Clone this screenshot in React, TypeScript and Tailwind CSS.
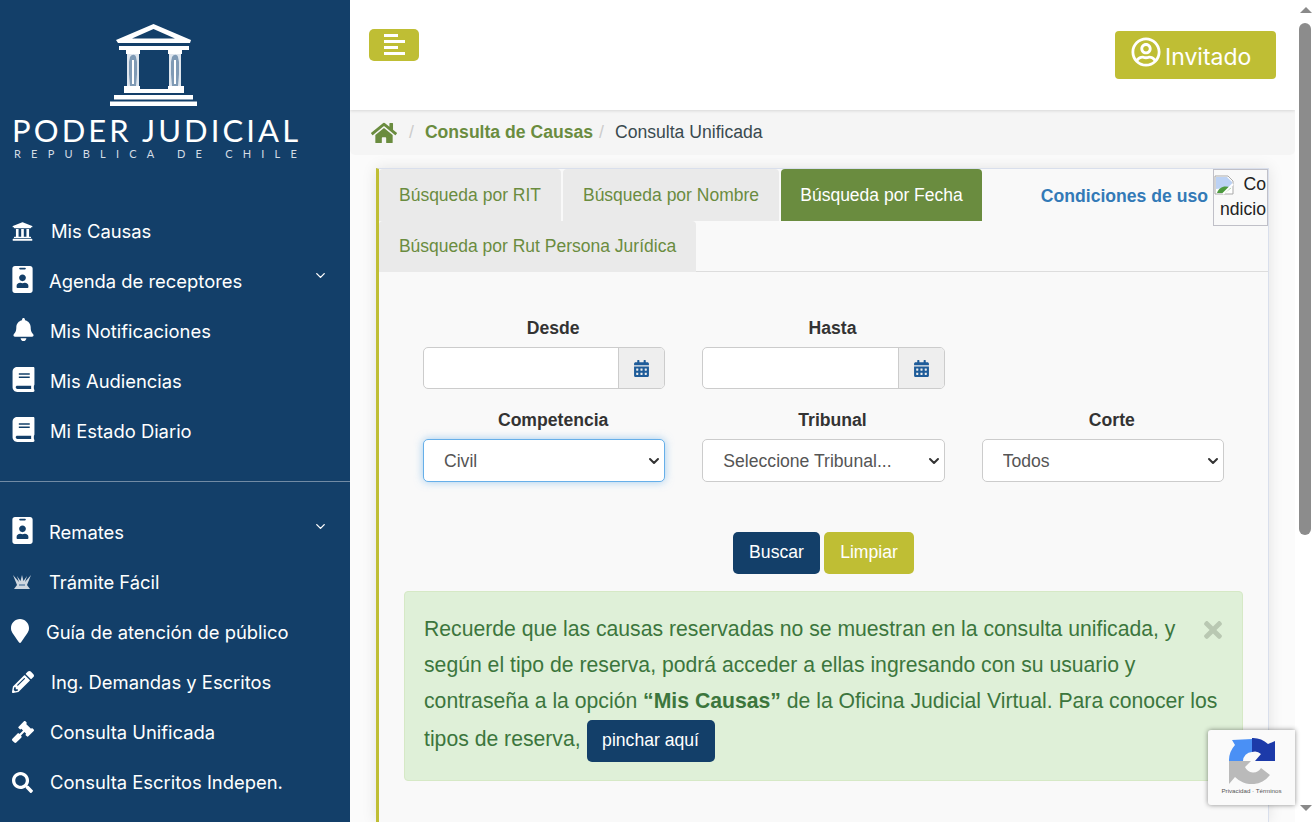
import type { ReactNode } from "react";
import { ChevronDown } from "lucide-react";
import {
  FaBell,
  FaBook,
  FaCalendarAlt,
  FaGavel,
  FaHome,
  FaIdBadge,
  FaMapMarker,
  FaPencilAlt,
  FaRegUserCircle,
  FaSearch,
  FaTimes,
  FaUniversity,
} from "react-icons/fa";

function LogoMark() {
  return (
    <svg width="88" height="82" viewBox="0 0 88 82" fill="#fff">
      <path d="M43.5 0 L81 16 L80 19 H8 L6 16 Z M43.5 5 L22 14.5 H65 Z" fillRule="evenodd" />
      <rect x="9" y="22" width="70" height="4" />
      <path d="M16 26 H30 V30 H16 Z M58 26 H72 V30 H58 Z" />
      <path d="M17 30 H29 V62 H17 Z M59 30 H71 V62 H59 Z" fill="#dfe6ee" />
      <path d="M20 33 c2 -3 5 -3 6 0 l1 5 v12 l-1 12 h-6 l-1 -12 v-12 Z" fill="#7f9ab5" />
      <path d="M62 33 c2 -3 5 -3 6 0 l1 5 v12 l-1 12 h-6 l-1 -12 v-12 Z" fill="#7f9ab5" />
      <path d="M22 36 h2 v24 h-2 Z M64 36 h2 v24 h-2 Z" />
      <path d="M14 62 H30 V65 H58 V62 H74 V69 H14 Z" />
      <rect x="4" y="71" width="79" height="4.5" />
      <rect x="0" y="77.5" width="87" height="4.5" />
    </svg>
  );
}

function MenuGlyph() {
  return (
    <svg width="21" height="22" viewBox="0 0 21 22" fill="#fff">
      <rect x="0" y="0" width="14" height="3" />
      <rect x="0" y="6" width="21" height="3" />
      <rect x="0" y="12" width="14" height="3" />
      <rect x="0" y="18" width="21" height="3" />
    </svg>
  );
}

function TramiteIcon() {
  return (
    <svg width="20" height="16" viewBox="0 0 20 16" fill="#cfd7e0">
      <path d="M1 1 L7 8 L5 2 L8.5 7 L10 1 L11.5 7 L15 2 L13 8 L19 1 L15 11 L18 15 H2 L5 11 Z" />
      <path d="M7 10 H13 V12 H7 Z" fill="#7f9ab5" />
    </svg>
  );
}

type NavRow = {
  label: string;
  icon: ReactNode;
  iconBox: string;
  chevron?: boolean;
};

const topRows: NavRow[] = [
  { label: "Mis Causas", icon: <FaUniversity size={21} />, iconBox: "w-[39px]" },
  { label: "Agenda de receptores", icon: <FaIdBadge size={27} className="mt-[-3px] ml-[-3px]" />, iconBox: "w-[37px]", chevron: true },
  { label: "Mis Notificaciones", icon: <FaBell size={23} className="mt-[-3px]" />, iconBox: "w-[38px]" },
  { label: "Mis Audiencias", icon: <FaBook size={25} className="mt-[-3px] ml-[-1px]" />, iconBox: "w-[38px]" },
  { label: "Mi Estado Diario", icon: <FaBook size={25} className="mt-[-3px] ml-[-1px]" />, iconBox: "w-[38px]" },
];

const bottomRows: NavRow[] = [
  { label: "Remates", icon: <FaIdBadge size={27} className="mt-[-3px] ml-[-3px]" />, iconBox: "w-[37px]", chevron: true },
  { label: "Trámite Fácil", icon: <TramiteIcon />, iconBox: "w-[37px]" },
  { label: "Guía de atención de público", icon: <FaMapMarker size={24} className="mt-[-3px] ml-[-4px]" />, iconBox: "w-[34px]" },
  { label: "Ing. Demandas y Escritos", icon: <FaPencilAlt size={22} />, iconBox: "w-[39px]" },
  { label: "Consulta Unificada", icon: <FaGavel size={22} />, iconBox: "w-[38px]" },
  { label: "Consulta Escritos Indepen.", icon: <FaSearch size={21} />, iconBox: "w-[38px]" },
];

function SideRow({ row }: { row: NavRow }) {
  return (
    <div className="relative flex h-[50px] items-center pl-[12px] text-white">
      <span className={`${row.iconBox} flex shrink-0 items-center`}>{row.icon}</span>
      <span className="pt-[2px] font-['Inter',sans-serif] text-[18.4px] whitespace-nowrap">{row.label}</span>
      {row.chevron && (
        <ChevronDown size={15} strokeWidth={2.2} className="absolute top-[12px] left-[313px]" />
      )}
    </div>
  );
}

function Sidebar() {
  return (
    <aside className="h-full w-[350px] shrink-0 overflow-hidden bg-[#133f69]">
      <div className="h-[206px] pt-[24px]">
        <div className="ml-[110px]">
          <LogoMark />
        </div>
        <div className="mt-[7px] ml-[12px] font-['Lato',sans-serif] text-[31px] leading-[34px] tracking-[3.1px] whitespace-nowrap text-white">
          PODER JUDICIAL
        </div>
        <div className="ml-[14px] font-['Lato',sans-serif] text-[11px] leading-[13px] tracking-[10.2px] whitespace-nowrap text-[#d4dce5]">
          REPUBLICA DE CHILE
        </div>
      </div>
      {topRows.map((r) => (
        <SideRow key={r.label} row={r} />
      ))}
      <div className="mt-[25px] mb-[25px] border-t border-white/40" />
      {bottomRows.map((r) => (
        <SideRow key={r.label} row={r} />
      ))}
    </aside>
  );
}

function FieldLabel({ children }: { children: string }) {
  return (
    <div className="mb-[9px] h-[20px] pl-[18px] text-center text-[17.6px] leading-[20px] font-bold text-[#333]">
      {children}
    </div>
  );
}

function DateField({ label }: { label: string }) {
  return (
    <div>
      <FieldLabel>{label}</FieldLabel>
      <div className="flex h-[42px] w-full overflow-hidden rounded-[5px] border border-[#ccc] bg-white">
        <div className="flex-1" />
        <div className="flex w-[46px] items-center justify-center border-l border-[#ccc] bg-[#eee]">
          <FaCalendarAlt size={17} className="text-[#1f5c99]" />
        </div>
      </div>
    </div>
  );
}

function SelectField({
  label,
  value,
  focused,
}: {
  label: string;
  value: string;
  focused?: boolean;
}) {
  return (
    <div>
      <FieldLabel>{label}</FieldLabel>
      <div className="relative">
        <select
          defaultValue={value}
          className={
            focused
              ? "h-[43px] w-full appearance-none rounded-[5px] border border-[#66afe9] bg-white pt-[1px] pl-[20px] text-[17.6px] text-[#555] shadow-[0_0_8px_rgba(102,175,233,0.6)]"
              : "h-[43px] w-full appearance-none rounded-[5px] border border-[#ccc] bg-white pt-[1px] pl-[20px] text-[17.6px] text-[#555]"
          }
        >
          <option>{value}</option>
        </select>
        <ChevronDown
          size={16}
          strokeWidth={3}
          className="pointer-events-none absolute top-[14px] right-[3px] text-[#333]"
        />
      </div>
    </div>
  );
}

function Tab({ label, active, className }: { label: string; active?: boolean; className: string }) {
  return (
    <div
      className={`${className} flex items-center justify-center rounded-t-[4px] text-[17.5px] ${
        active ? "bg-[#6a8c3f] text-white" : "bg-[#eaeaea] text-[#6a8c3f]"
      }`}
    >
      {label}
    </div>
  );
}

function Recaptcha() {
  return (
    <div className="absolute top-[730px] left-[1208px] flex h-[75px] w-[87px] flex-col items-center rounded-l-[3px] bg-[#fafafa] pt-[8px] shadow-[0_0_5px_rgba(0,0,0,0.45)]">
      <svg width="46" height="46" viewBox="0 0 46 46">
        <path d="M0 23 A23 23 0 0 1 6 7 L3 2 L23 1 V14 A9 9 0 0 0 14 23 Z" fill="#4a90f5" />
        <path d="M23 0 A23 23 0 0 1 39 6 L46 3 V23 H26 L32 16 A9 9 0 0 0 23 14 Z" fill="#1c3aa9" />
        <path d="M0 23 H22 L16 29 A9 9 0 0 0 32 30 L41 37 A23 23 0 0 1 6 39 L0 46 Z" fill="#bababa" />
      </svg>
      <div className="mt-[2px] text-[6.2px] leading-[10px] whitespace-nowrap text-[#555]">Privacidad · Términos</div>
    </div>
  );
}

function Scrollbar() {
  return (
    <div className="flex h-full w-[19px] shrink-0 flex-col items-start bg-white pl-[4px]">
      <div className="mt-[7px] ml-[1px] h-0 w-0 border-x-[6px] border-b-[6px] border-x-transparent border-b-[#8a8a8a]" />
      <div className="mt-[10px] h-[512px] w-[12px] rounded-[6px] bg-[#8c8c8c]" />
      <div className="mt-[270px] ml-[1px] h-0 w-0 border-x-[6px] border-t-[6px] border-x-transparent border-t-[#8a8a8a]" />
    </div>
  );
}

export default function App() {
  return (
    <div className="relative flex h-[822px] w-[1314px] overflow-hidden bg-white font-['Liberation_Sans',Arial,sans-serif]">
      <Sidebar />
      <main className="flex h-full flex-1 flex-col overflow-hidden bg-[#fbfbfb]">
        <header className="relative z-10 flex h-[110px] shrink-0 items-start justify-between bg-white pt-[29px] pr-[19px] pl-[19px] shadow-[0_1px_3px_rgba(0,0,0,0.12)]">
          <button className="flex h-[32px] w-[50px] items-start justify-center rounded-[5px] bg-[#bfbe34] pt-[5px]">
            <MenuGlyph />
          </button>
          <button className="mt-[2px] flex h-[48px] w-[161px] items-center rounded-[4px] bg-[#bfbe34] pt-[4px] pl-[16px] font-['Inter',sans-serif] text-[23px] text-white">
            <FaRegUserCircle size={30} className="mr-[4px] mb-[10px]" />
            Invitado
          </button>
        </header>
        <nav className="flex h-[45px] shrink-0 items-center rounded-b-[5px] bg-[#f5f5f5] pl-[21px] text-[17.6px]">
          <FaHome size={26} className="text-[#6a8c3f]" />
          <span className="ml-[12px] text-[#ccc]">/</span>
          <span className="ml-[11px] font-bold text-[#6a8c3f]">Consulta de Causas</span>
          <span className="ml-[6px] text-[#ccc]">/</span>
          <span className="ml-[11px] text-[#3a4a4f]">Consulta Unificada</span>
        </nav>
        <section className="mt-[13px] ml-[26px] w-[893px] flex-1 border-t border-r border-l-[3px] border-t-[#d9dfec] border-r-[#d9dfec] border-l-[#bfbe34] bg-[#f9f9f9] shadow-[0_0_14px_rgba(0,0,0,0.1)]">
          <div className="flex h-[103px] items-start justify-between border-b border-[#ddd]">
            <div className="flex w-[640px] flex-wrap">
              <Tab label="Búsqueda por RIT" className="mr-[2px] h-[52px] w-[182px]" />
              <Tab label="Búsqueda por Nombre" className="mr-[2px] h-[52px] w-[216px]" />
              <Tab label="Búsqueda por Fecha" active className="h-[52px] w-[201px]" />
              <Tab label="Búsqueda por Rut Persona Jurídica" className="h-[51px] w-[317px] rounded-none" />
            </div>
            <div className="flex items-start">
              <a className="mt-[14px] mr-[5px] text-[17.6px] font-bold text-[#337ab7]">Condiciones de uso</a>
              <div className="h-[57px] w-[55px] border border-[#c0c0c8] text-[17.6px] leading-[25px] text-[#222]">
                <div className="flex items-center justify-between pt-[2px] pr-[1px]">
                  <svg width="20" height="20" viewBox="0 0 20 20">
                    <path d="M1 1 H14 L19 6 V19 H1 Z" fill="#fff" stroke="#a9a9a9" />
                    <path d="M2 2 H13 L18 7 V12 L2 14 Z" fill="#bcd2f4" />
                    <path d="M3 18 C5 12 11 10 17 13 L11 18 Z" fill="#4d9a3f" />
                    <path d="M9 19 L19 9" stroke="#fff" strokeWidth="2" />
                  </svg>
                  <span>Co</span>
                </div>
                <div className="pr-[1px] text-right">ndicio</div>
              </div>
            </div>
          </div>

          <div className="ml-[44px] grid w-[801px] grid-cols-3 gap-x-[37px] pt-[46px]">
            <DateField label="Desde" />
            <DateField label="Hasta" />
            <div />
            <div className="mt-[21px]">
              <SelectField label="Competencia" value="Civil" focused />
            </div>
            <div className="mt-[21px]">
              <SelectField label="Tribunal" value="Seleccione Tribunal..." />
            </div>
            <div className="mt-[21px]">
              <SelectField label="Corte" value="Todos" />
            </div>
          </div>

          <div className="mt-[50px] ml-[354px] flex gap-[4px] text-[17.6px] text-white">
            <button className="h-[42px] w-[87px] rounded-[5px] bg-[#133f69] pb-[2px]">Buscar</button>
            <button className="h-[42px] w-[90px] rounded-[5px] bg-[#bfbe34] pb-[2px]">Limpiar</button>
          </div>

          <div className="mt-[17px] ml-[25px] h-[190px] w-[839px] rounded-[4px] border border-[#d6e9c6] bg-[#dff0d8] px-[19px] pt-[19px] text-[21.2px] leading-[36px] text-[#3c763d]">
            <FaTimes size={26} className="float-right mt-[6px] mr-[-3px] ml-[10px] text-[#b9c8b2]" />
            Recuerde que las causas reservadas no se muestran en la consulta unificada, y según el tipo de reserva, podrá acceder a ellas ingresando con su usuario y contraseña a la opción{" "}
            <strong>“Mis Causas”</strong> de la Oficina Judicial Virtual. Para conocer los tipos de reserva,{" "}
            <button className="mt-[1px] h-[42px] w-[128px] rounded-[5px] bg-[#133f69] pb-[2px] align-middle text-[17.6px] leading-[20px] text-white">
              pinchar aquí
            </button>
          </div>
        </section>
      </main>
      <Scrollbar />
      <Recaptcha />
    </div>
  );
}
